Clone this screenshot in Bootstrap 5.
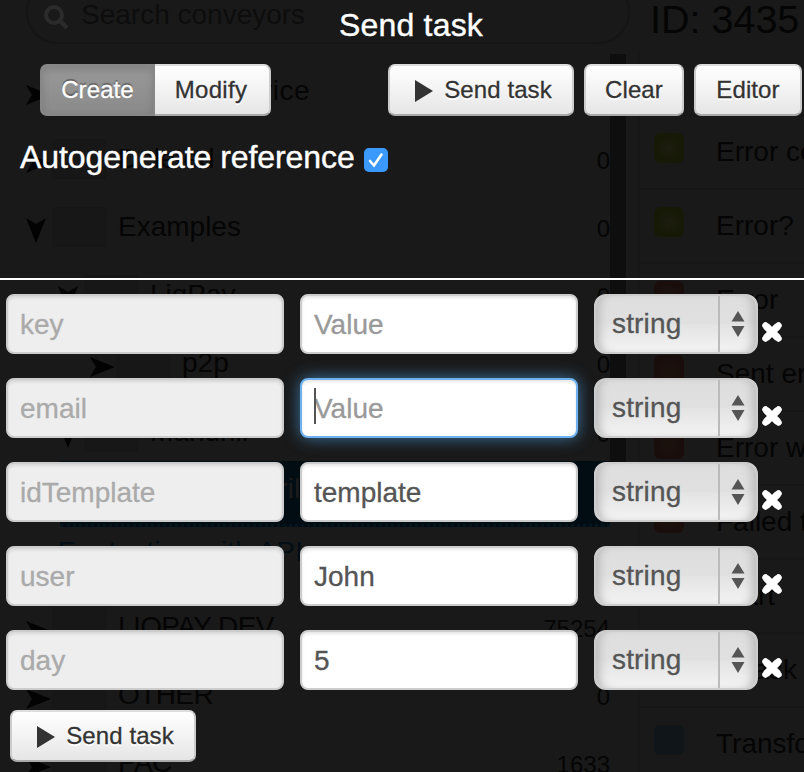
<!DOCTYPE html>
<html lang="en">
<head>
<meta charset="utf-8">
<title>Send task</title>
<link href="https://cdn.jsdelivr.net/npm/bootstrap@5.3.0/dist/css/bootstrap.min.css" rel="stylesheet">
<style>
body{width:804px;height:772px;background:#191919;font-family:"Liberation Sans",Arial,sans-serif;line-height:1;overflow:hidden}
.stage{height:772px}
/* dimmed application behind the dialog */
.dimmed{color:#050505;font-size:28px;white-space:nowrap}
.tree-pane{width:610px}
.rail{width:16px;height:410px;margin-top:54px;background:#0e0e0e}
.search-box{width:604px;height:64px;margin:-20px 0 13px 26px;border:2px solid #151515;border-radius:32px;color:#0d0d0d;padding:9px 0 0 15px;font-size:28px}
.tree-row{height:68px}
.tree-row .num{font-size:24px;padding-top:4px}
.tree-row svg{width:26px;height:20px;fill:#030303}
.tree-row svg.open{width:20px;height:26px;margin-right:6px}
.lv0{padding-left:26px}.lv1{padding-left:58px}.lv2{padding-left:90px}
.folder{width:54px;height:40px;margin-right:12px;background:#171717;border:1px solid #161616;border-radius:3px}
.caps{letter-spacing:-.6px}
.svc{letter-spacing:.45px}
.r-short{height:64px;padding-top:6px}
.r-sel{height:66px;margin-left:60px;padding:0 0 8px 16px;background:#020d13;border-bottom:3px dotted #04151d;color:#1c1c1c}
.r-api{height:66px;color:#030d14;letter-spacing:.2px}
.node-pane{width:166px;margin-left:12px}
.node-id{font-size:39.500px;height:52px;padding:0 0 0 12px;line-height:38px}
.node-list{border-left:2px solid #171717}
.node-row{height:74px;border-bottom:2px solid #161616;padding-left:14px}
.node-gap{height:64px}
.chip{width:30px;height:30px;border-radius:6px;margin-top:-9px}
.c-y{background:radial-gradient(#1c1d0e,#171907 60%)}
.c-r{background:radial-gradient(#1b120e,#190e0b 60%)}
.c-n{background:transparent}
.c-b{background:#0f1518}
/* dialog */
.dialog-layer{color:#fff}
.dlg-head{height:278px}
.dlg-title{font-size:32px;height:64px;padding-top:9px;padding-left:18px;letter-spacing:.2px;-webkit-text-stroke:.4px #fff}
.tool-row{height:52px;padding-left:40px;padding-right:2px;gap:10px}
.tb{height:52px;border:2px solid #ccc;border-top-color:#ddd;border-bottom-color:#aaa;border-radius:7px;background:linear-gradient(#fff,#e6e6e6);color:#333;font-size:24px;line-height:1;padding:0;text-shadow:0 2px 1px #fff;letter-spacing:.1px;-webkit-text-stroke:.3px #333}
.tb:hover{color:#333}
.tb svg{width:20px;height:24px;margin-right:10px;margin-top:1px}
.w-send{width:186px;padding-left:4px}.w-clear{width:100px}.w-edit{width:108px}.w-mod{width:116px;padding-right:2px;letter-spacing:.3px;border-left:0;border-radius:0 7px 7px 0}
.w-create{width:115px;border-radius:7px 0 0 7px;border-color:#878787;background:linear-gradient(#999,#8a8a8a);box-shadow:inset 0 4px 8px rgba(0,0,0,.15);color:#fff;text-shadow:0 -2px 1px rgba(0,0,0,.35);-webkit-text-stroke:.3px #fff}
.auto-label{font-size:32px;letter-spacing:-.07px;padding:25px 0 0 20px;-webkit-text-stroke:.4px #fff}
.tick{width:24px;height:24px;border-radius:5px;background:#3b99fc;margin:7px 0 0 9px}
.split-line{height:2px;background:#fff}
.field-rows{padding:14px 0 0 6px;gap:24px}
.field-row{height:60px}
.fld{width:278px;height:60px;border:2px solid #ccc;border-radius:8px;background:#fff!important;box-shadow:inset 0 2px 3px rgba(0,0,0,.1);color:#555;font-size:28px;line-height:1;padding:2px 12px 0;-webkit-text-stroke:.3px}
.fld::placeholder{color:#999;opacity:1}
.fld:disabled{background:#eee!important;color:#aaa}
.fld.active-fld{border-color:#6fb1ef;box-shadow:inset 0 2px 3px rgba(0,0,0,.1),0 0 16px rgba(82,168,236,.65)}
.caret{left:14px;top:10px;width:2px;height:36px;background:#555}
.pick{width:164px;height:60px;border:2px solid #ccc;border-radius:12px;background:linear-gradient(#dedede 0,#e0e0e0 50%,#e3e3e3 51%,#f3f3f3);box-shadow:inset 9px 0 8px -5px #bdbdbd,inset -9px 0 8px -5px #bdbdbd;color:#555;font-size:28px;letter-spacing:.15px;padding-left:16px;-webkit-text-stroke:.3px}
.pick .arrows{width:38px;border-left:2px solid #bbb}
.pick svg{width:14px;height:26px;fill:#555;margin-right:1px}
.del{width:22px;height:22px;margin:16px 0 0 3px}
.foot{padding:20px 0 0 10px}
</style>
<script src="https://cdn.jsdelivr.net/npm/bootstrap@5.3.0/dist/js/bootstrap.bundle.min.js"></script>
</head>
<body>
<svg class="d-none">
<symbol id="right" viewBox="0 0 26 20"><path d="M0 0L25 10L0 20L6 10Z"/></symbol>
<symbol id="down" viewBox="0 0 20 26"><path d="M0 0L10 25L20 0L10 6Z"/></symbol>
<symbol id="play" viewBox="0 0 20 24"><path d="M1 1L19 12L1 23Z" fill="#333"/></symbol>
<symbol id="sort" viewBox="0 0 14 26"><path d="M.5 10.500L7 0L13.500 10.500ZM.5 15H13.500L7 26Z"/></symbol>
<symbol id="cross" viewBox="0 0 22 22"><path d="M5 5L17 17M17 5L5 17" stroke="#fff" stroke-width="7.400"/><path d="M4.500 4.500L17.500 17.500M17.500 4.500L4.500 17.500" stroke="#fff" stroke-width="6.500" stroke-linecap="round"/></symbol>
</svg>
<div class="stage position-relative overflow-hidden">
<div class="dimmed d-flex align-items-start h-100" aria-hidden="true">
 <div class="tree-pane flex-shrink-0">
  <div class="search-box d-flex align-items-center"><svg width="26" height="26" viewBox="0 0 26 26" fill="none" stroke="#2b2b2b" stroke-width="4"><circle cx="11" cy="11" r="8"/><path d="M17 17L24 24"/></svg><span class="ms-2 mb-1 ps-1">Search conveyors</span></div>
  <div class="tree-row lv0 d-flex align-items-center"><svg class="mt-2"><use href="#right"/></svg><span class="folder"></span><span class="svc">Invoice service</span><span class="num ms-auto">1</span></div>
  <div class="tree-row lv0 d-flex align-items-center"><svg class="mt-2"><use href="#right"/></svg><span class="folder"></span><span>Deleted</span><span class="num ms-auto">0</span></div>
  <div class="tree-row lv0 d-flex align-items-center"><svg class="open mt-2"><use href="#down"/></svg><span class="folder"></span><span>Examples</span><span class="num ms-auto">0</span></div>
  <div class="tree-row lv1 d-flex align-items-center"><svg class="open mt-2"><use href="#down"/></svg><span class="folder"></span><span>LiqPay</span><span class="num ms-auto">0</span></div>
  <div class="tree-row lv2 d-flex align-items-center"><svg class="mt-2"><use href="#right"/></svg><span class="folder"></span><span>p2p</span><span class="num ms-auto">0</span></div>
  <div class="tree-row lv1 r-short d-flex align-items-center"><svg class="open mt-2"><use href="#down"/></svg><span class="folder"></span><span>Mandrill</span><span class="num ms-auto">0</span></div>
  <div class="tree-row r-sel d-flex align-items-center"><span>Send mail Mandrill</span></div>
  <div class="tree-row lv1 r-api d-flex align-items-center"><span class="mb-3">For testing with API</span></div>
  <div class="tree-row lv0 d-flex align-items-center"><svg class="mt-2"><use href="#right"/></svg><span class="folder"></span><span class="caps">LIQPAY DEV</span><span class="num ms-auto">75254</span></div>
  <div class="tree-row lv0 d-flex align-items-center"><svg class="mt-2"><use href="#right"/></svg><span class="folder"></span><span class="caps">OTHER</span><span class="num ms-auto">0</span></div>
  <div class="tree-row lv0 d-flex align-items-center"><svg class="mt-2"><use href="#right"/></svg><span class="folder"></span><span class="caps">PAC</span><span class="num ms-auto">1633</span></div>
 </div>
 <div class="rail flex-shrink-0"></div>
 <div class="node-pane flex-shrink-0">
  <div class="node-id">ID: 3435</div>
  <div class="node-list">
   <div class="node-row node-gap"></div>
   <div class="node-row d-flex align-items-center"><span class="chip c-y flex-shrink-0"></span><span class="ms-4 ps-2">Error condition</span></div>
   <div class="node-row d-flex align-items-center"><span class="chip c-y flex-shrink-0"></span><span class="ms-4 ps-2">Error?</span></div>
   <div class="node-row d-flex align-items-center"><span class="chip c-r flex-shrink-0"></span><span class="ms-4 ps-2">Error</span></div>
   <div class="node-row d-flex align-items-center"><span class="chip c-r flex-shrink-0"></span><span class="ms-4 ps-2">Sent error</span></div>
   <div class="node-row d-flex align-items-center"><span class="chip c-r flex-shrink-0"></span><span class="ms-4 ps-2">Error with</span></div>
   <div class="node-row d-flex align-items-center"><span class="chip c-r flex-shrink-0"></span><span class="ms-4 ps-2">Failed to</span></div>
   <div class="node-row d-flex align-items-center"><span class="chip c-n flex-shrink-0"></span><span class="ms-4 ps-2">Start</span></div>
   <div class="node-row d-flex align-items-center"><span class="chip c-n flex-shrink-0"></span><span class="ms-4 ps-2">Is task</span></div>
   <div class="node-row d-flex align-items-center"><span class="chip c-b flex-shrink-0"></span><span class="ms-4 ps-2">Transform</span></div>
  </div>
 </div>
</div>

<form class="dialog-layer position-absolute top-0 start-0 w-100 h-100">
 <div class="dlg-head">
  <div class="dlg-title text-center">Send task</div>
  <div class="tool-row d-flex">
   <div class="d-flex me-auto"><button type="button" class="btn tb w-create">Create</button><button type="button" class="btn tb w-mod">Modify</button></div>
   <button type="button" class="btn tb w-send d-flex align-items-center justify-content-center"><svg><use href="#play"/></svg>Send task</button>
   <button type="button" class="btn tb w-clear">Clear</button>
   <button type="button" class="btn tb w-edit">Editor</button>
  </div>
  <label class="auto-label d-flex">Autogenerate reference<span class="tick d-flex"><svg width="24" height="24" viewBox="0 0 24 24"><path d="M6 13L10 17.500L17.500 6.500" fill="none" stroke="#fff" stroke-width="2.600" stroke-linecap="round"/></svg></span></label>
 </div>
 <div class="split-line"></div>
 <div class="field-rows d-flex flex-column">
  <div class="field-row d-flex"><input class="form-control fld me-3" disabled value="key"><input class="form-control fld me-3" placeholder="Value"><div class="pick d-flex justify-content-between align-items-stretch"><span class="align-self-center">string</span><span class="arrows d-flex align-items-center justify-content-center"><svg><use href="#sort"/></svg></span></div><svg class="del align-self-center"><use href="#cross"/></svg></div>
  <div class="field-row d-flex"><input class="form-control fld me-3" disabled value="email"><div class="position-relative me-3"><input class="form-control fld active-fld" placeholder="Value"><span class="caret position-absolute"></span></div><div class="pick d-flex justify-content-between align-items-stretch"><span class="align-self-center">string</span><span class="arrows d-flex align-items-center justify-content-center"><svg><use href="#sort"/></svg></span></div><svg class="del align-self-center"><use href="#cross"/></svg></div>
  <div class="field-row d-flex"><input class="form-control fld me-3" disabled value="idTemplate"><input class="form-control fld me-3" value="template"><div class="pick d-flex justify-content-between align-items-stretch"><span class="align-self-center">string</span><span class="arrows d-flex align-items-center justify-content-center"><svg><use href="#sort"/></svg></span></div><svg class="del align-self-center"><use href="#cross"/></svg></div>
  <div class="field-row d-flex"><input class="form-control fld me-3" disabled value="user"><input class="form-control fld me-3" value="John"><div class="pick d-flex justify-content-between align-items-stretch"><span class="align-self-center">string</span><span class="arrows d-flex align-items-center justify-content-center"><svg><use href="#sort"/></svg></span></div><svg class="del align-self-center"><use href="#cross"/></svg></div>
  <div class="field-row d-flex"><input class="form-control fld me-3" disabled value="day"><input class="form-control fld me-3" value="5"><div class="pick d-flex justify-content-between align-items-stretch"><span class="align-self-center">string</span><span class="arrows d-flex align-items-center justify-content-center"><svg><use href="#sort"/></svg></span></div><svg class="del align-self-center"><use href="#cross"/></svg></div>
 </div>
 <div class="foot"><button type="button" class="btn tb w-send d-flex align-items-center justify-content-center"><svg><use href="#play"/></svg>Send task</button></div>
</form>
</div>
</body>
</html>
